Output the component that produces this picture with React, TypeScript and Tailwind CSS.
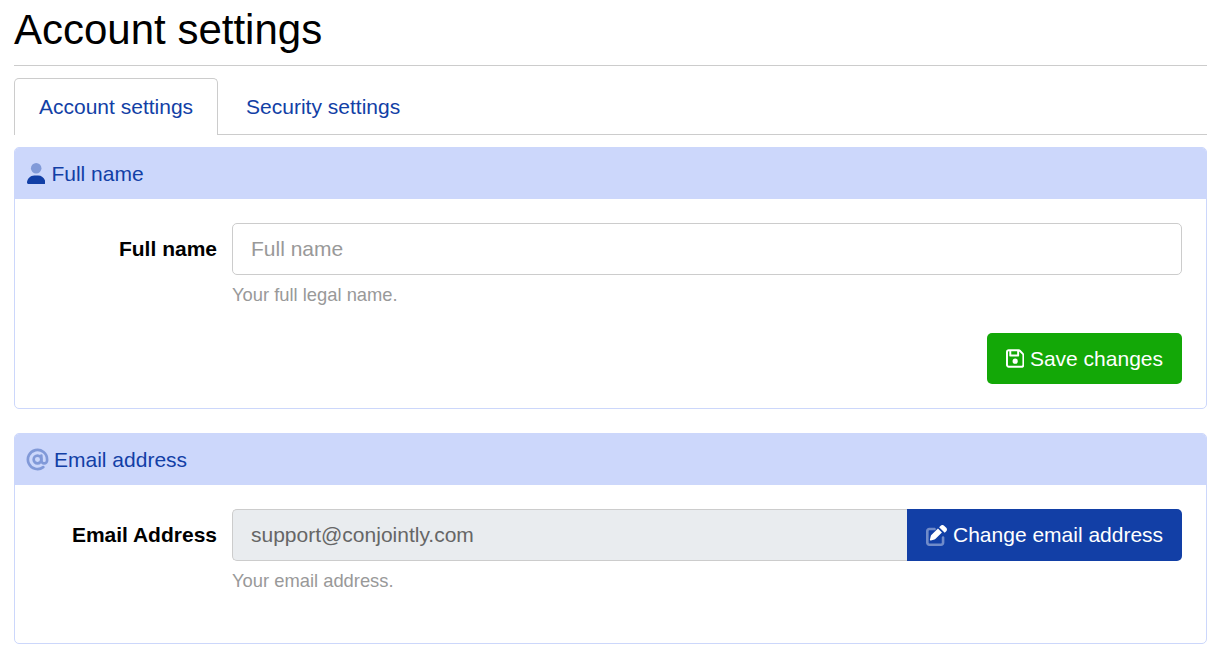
import React from "react";
import { FaRegFloppyDisk } from "react-icons/fa6";
import { AtSign } from "lucide-react";

function UserIcon() {
  return (
    <svg viewBox="0 0 448 512" className="h-[21px] w-[18.4px] shrink-0" fill="#123fa6" aria-hidden="true">
      <path opacity="0.4" d="M224 256A128 128 0 1 0 224 0a128 128 0 1 0 0 256z" />
      <path d="M178.3 304C79.8 304 0 383.8 0 482.3C0 498.7 13.3 512 29.7 512H418.3c16.4 0 29.7-13.3 29.7-29.7C448 383.8 368.2 304 269.7 304H178.3z" />
    </svg>
  );
}

function EditIcon() {
  return (
    <svg viewBox="0 0 512 512" className="h-[21px] w-[21px] shrink-0" fill="#ffffff" aria-hidden="true">
      <path opacity="0.4" d="M80 64C36 64 0 100 0 144v288c0 44 36 80 80 80h288c44 0 80-36 80-80V304c0-18-14-32-32-32s-32 14-32 32v128c0 9-7 16-16 16H80c-9 0-16-7-16-16V144c0-9 7-16 16-16h128c18 0 32-14 32-32s-14-32-32-32H80z" />
      <path d="M441 17c-23-23-60-23-83 0l-38 38 136 136 38-38c23-23 23-60 0-83L441 17zM292 83 130 245c-6 6-11 14-13 22l-21 85c-2 7 0 14 5 19s12 7 19 5l85-21c8-2 16-7 22-13l162-162L292 83z" />
    </svg>
  );
}

function SectionCard({ icon, title, children, size }: { icon: React.ReactNode; title: string; children: React.ReactNode; size: string }) {
  return (
    <section className={`rounded-[5px] border border-[#ccd7fb] bg-white ${size}`}>
      <div className="flex h-[51px] items-center gap-[6px] rounded-t-[4px] bg-[#ccd7fb] px-3 text-[21px] text-[#123fa6]">
        {icon}
        <span>{title}</span>
      </div>
      {children}
    </section>
  );
}

export default function App() {
  return (
    <div className="h-[649px] overflow-hidden bg-white pr-[5px] pl-[14px] font-['Liberation_Sans',Arial,sans-serif] text-black">
      <h1 className="h-[65px] pt-[5px] text-[42px] leading-[50px]">Account settings</h1>
      <div className="border-t border-[#cccccc] pt-3">
        <div className="flex h-[57px] border-b border-[#cccccc] text-[21px] text-[#123fa6]">
          <div className="relative z-10 mb-[-1px] flex h-[57px] items-center rounded-t-[5px] border border-b-0 border-[#cccccc] bg-white px-6">
            Account settings
          </div>
          <div className="flex items-center px-7 pt-px">Security settings</div>
        </div>
      </div>
      <div className="mt-3 flex flex-col gap-6">
        <SectionCard icon={<UserIcon />} title="Full name" size="h-[262px]">
          <div className="flex pt-6 pr-6">
            <label className="w-[202px] pt-[11px] text-right text-[21px] leading-[30px] font-bold">Full name</label>
            <div className="ml-[15px] flex-1">
              <div className="flex h-[52px] items-center rounded-[5px] border border-[#cccccc] px-[18px] text-[21px] text-[#999999]">
                Full name
              </div>
              <p className="mt-2 text-[18.375px] leading-6 text-[#999999]">Your full legal name.</p>
            </div>
          </div>
          <div className="mt-[26px] flex justify-end pr-6">
            <button className="flex h-[51px] items-center gap-[6px] rounded-[5px] bg-[#13a807] px-[19px] text-[21px] text-white">
              <FaRegFloppyDisk className="h-[21px] w-[18.4px]" />
              Save changes
            </button>
          </div>
        </SectionCard>
        <SectionCard
          icon={<AtSign size={23} strokeWidth={2.8} className="-mx-px shrink-0 text-[#123fa6] opacity-40" />}
          title="Email address"
          size="h-[211px]"
        >
          <div className="flex pt-6 pr-6">
            <label className="w-[202px] pt-[11px] text-right text-[21px] leading-[30px] font-bold">Email Address</label>
            <div className="ml-[15px] flex-1">
              <div className="flex h-[52px]">
                <div className="flex flex-1 items-center rounded-l-[5px] border border-r-0 border-[#cccccc] bg-[#e9ecef] px-[18px] text-[21px] text-[#666666]">
                  support@conjointly.com
                </div>
                <button className="flex w-[275px] items-center gap-[6px] rounded-r-[5px] bg-[#123fa6] pl-[19px] text-[21px] text-white">
                  <EditIcon />
                  Change email address
                </button>
              </div>
              <p className="mt-2 text-[18.375px] leading-6 text-[#999999]">Your email address.</p>
            </div>
          </div>
        </SectionCard>
      </div>
    </div>
  );
}
